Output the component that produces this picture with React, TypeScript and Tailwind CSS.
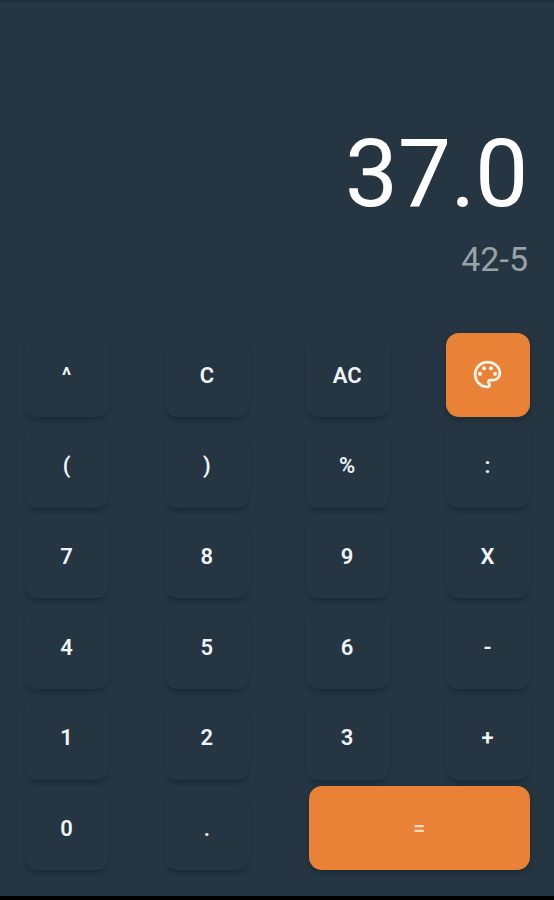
import React from 'react';
import { MdOutlinePalette } from 'react-icons/md';

const KEYS = ['^', 'C', 'AC', 'palette', '(', ')', '%', ':', '7', '8', '9', 'X', '4', '5', '6', '-', '1', '2', '3', '+', '0', '.', '='];

function Key({ label }: { label: string }) {
  if (label === 'palette') {
    return (
      <button className="flex h-[84px] w-[84px] items-center justify-center rounded-[13px] bg-[#e98236] text-[#fff5ec] shadow-[0_3px_5px_rgba(10,25,32,0.35)]">
        <MdOutlinePalette className="-mt-px h-[33px] w-[33px]" />
      </button>
    );
  }

  if (label === '=') {
    return (
      <button className="col-span-2 ml-[3px] h-[84px] w-[221px] rounded-[13px] bg-[#e98236] text-[22px] font-medium text-[#fbd9bd] shadow-[0_3px_5px_rgba(10,25,32,0.35)]">
        =
      </button>
    );
  }

  return (
    <button className="h-[84px] w-[84px] rounded-[13px] bg-[#253541] pr-px text-[22px] font-semibold text-[#eef4f8] shadow-[0_5px_5px_-2px_rgba(10,25,32,0.4)]">
      {label}
    </button>
  );
}

export default function App() {
  return (
    <div className="flex h-[900px] w-[554px] flex-col overflow-hidden border-t-2 border-b-4 border-t-[#1f2f39] border-b-black bg-[#253541] font-['Roboto',sans-serif]">
      <div className="flex h-[331px] flex-col items-end pr-[26px] pt-[114px]">
        <div className="text-[95px] leading-[116px] tracking-[-0.5px] text-white">37.0</div>
        <div className="mt-[6px] text-[34px] leading-[42px] text-[#97a2aa]">42-5</div>
      </div>
      <div className="ml-[25px] grid w-[505px] grid-cols-[84px_84px_84px_84px] justify-between gap-y-[6.7px]">
        {KEYS.map((label) => (
          <Key key={label} label={label} />
        ))}
      </div>
    </div>
  );
}
